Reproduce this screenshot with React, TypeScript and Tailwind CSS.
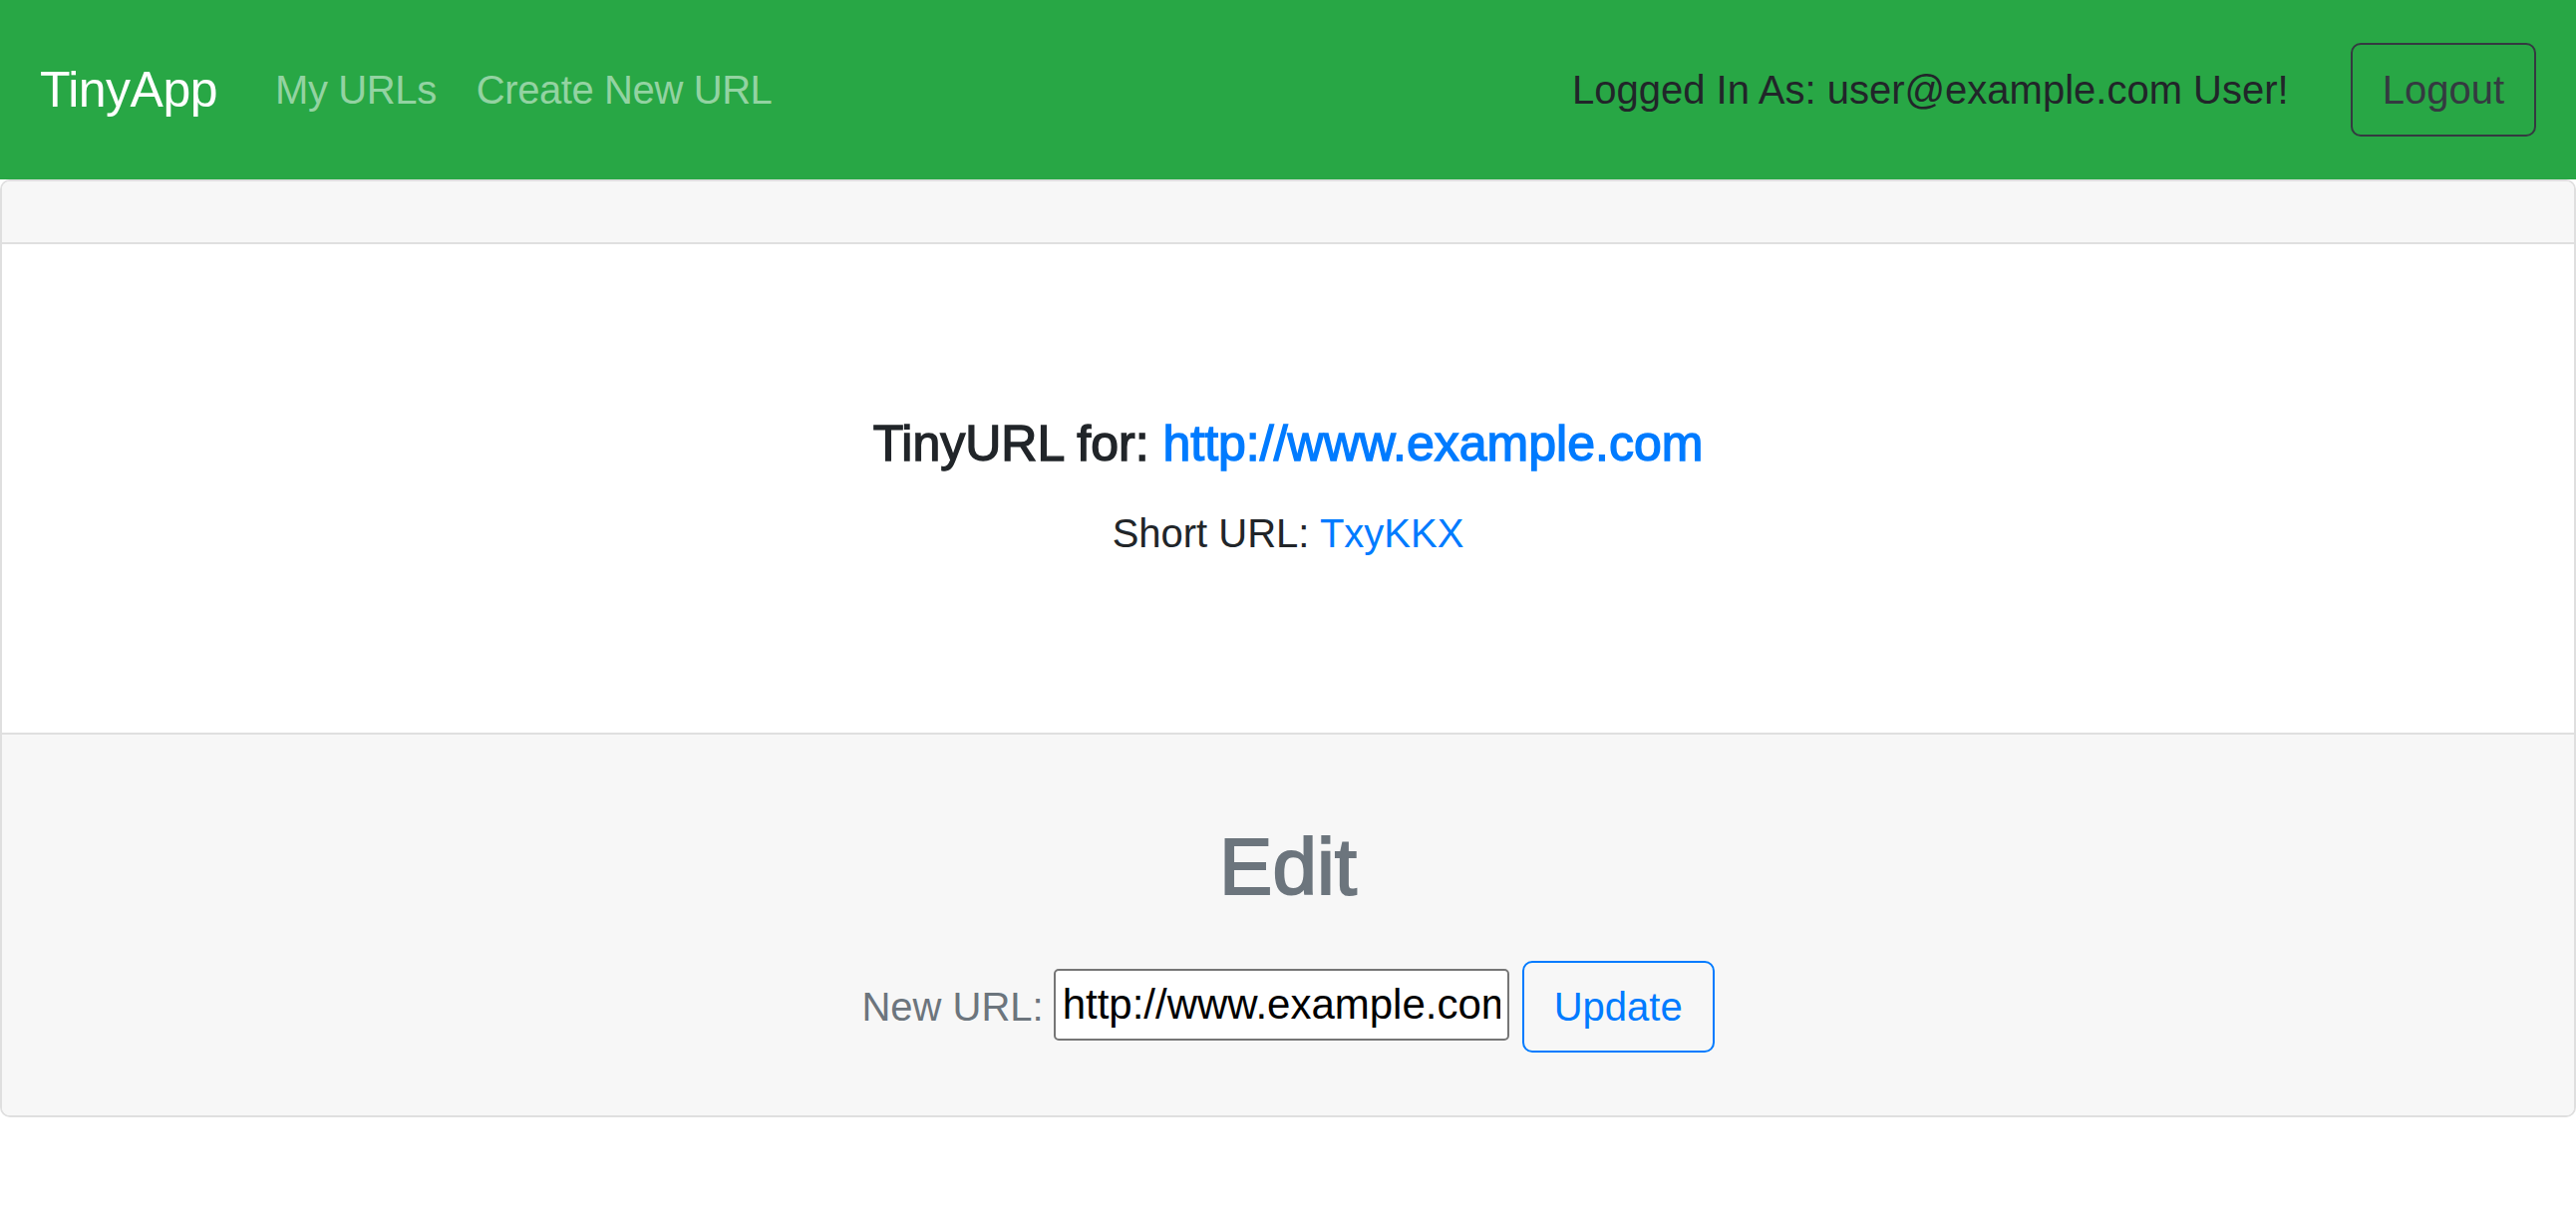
import React, { useState } from 'react';

const font = { fontFamily: '"Liberation Sans", Arial, sans-serif' };

function Navbar() {
  return (
    <nav className="flex h-[180px] items-center bg-[#28a745] px-[40px]">
      <a href="#" className="mr-[38px] text-[50px] leading-[1.5] tracking-[-0.5px] text-white">
        TinyApp
      </a>
      <a href="#" className="px-[20px] text-[40px] leading-[1.5] tracking-[-0.4px] text-white/50">
        My URLs
      </a>
      <a href="#" className="px-[20px] text-[40px] leading-[1.5] tracking-[-0.4px] text-white/50">
        Create New URL
      </a>
      <div className="ml-auto flex items-center">
        <span className="text-[40px] leading-[1.5] text-[#212529]">
          Logged In As: user@example.com User!
        </span>
        <button
          type="button"
          className="ml-[62px] h-[94px] rounded-[10px] border-[2.5px] border-[#343a40] px-[30px] text-[40px] leading-[1.5] text-[#343a40]"
        >
          Logout
        </button>
      </div>
    </nav>
  );
}

export default function App() {
  const [longUrl, setLongUrl] = useState('http://www.example.com');

  return (
    <div className="min-h-screen w-full bg-white text-[#212529]" style={font}>
      <Navbar />
      <div className="overflow-hidden rounded-[10px] border-[2.5px] border-[#dfdfdf]">
        <div className="h-[63px] border-b-[2.5px] border-[#dfdfdf] bg-[#f7f7f7]" />

        <div className="flex h-[490px] flex-col items-center bg-white pt-[170px]">
          <h5 className="mb-[30px] text-[50px] leading-[1.2] font-medium [-webkit-text-stroke:1.4px_currentColor]">
            TinyURL for:{' '}
            <a href="#" className="text-[#007bff]">
              http://www.example.com
            </a>
          </h5>
          <p className="text-[40px] leading-[1.5]">
            Short URL:{' '}
            <a href="#" className="text-[#007bff]">
              TxyKKX
            </a>
          </p>
        </div>

        <div className="flex flex-col items-center border-t-[2.5px] border-[#dfdfdf] bg-[#f7f7f7] pt-[85px] pb-[63px]">
          <h2 className="text-[80px] leading-[1.2] font-medium text-[#6c757d] [-webkit-text-stroke:2px_currentColor]">
            Edit
          </h2>
          <form
            className="mt-[46px] flex items-center"
            onSubmit={(e) => e.preventDefault()}
          >
            <label htmlFor="longURL" className="text-[40px] leading-[1.5] text-[#6c757d]">
              New URL:
            </label>
            <input
              id="longURL"
              type="text"
              value={longUrl}
              onChange={(e) => setLongUrl(e.target.value)}
              className="ml-[10px] mb-[4px] h-[72px] w-[457px] rounded-[5px] border-[2.5px] border-[#767676] bg-white px-[7px] text-[42px] text-black"
              style={font}
            />
            <button
              type="submit"
              className="ml-[13px] h-[92px] rounded-[10px] border-[2.5px] border-[#007bff] px-[30px] text-[40px] leading-[1.5] text-[#007bff]"
            >
              Update
            </button>
          </form>
        </div>
      </div>
    </div>
  );
}
